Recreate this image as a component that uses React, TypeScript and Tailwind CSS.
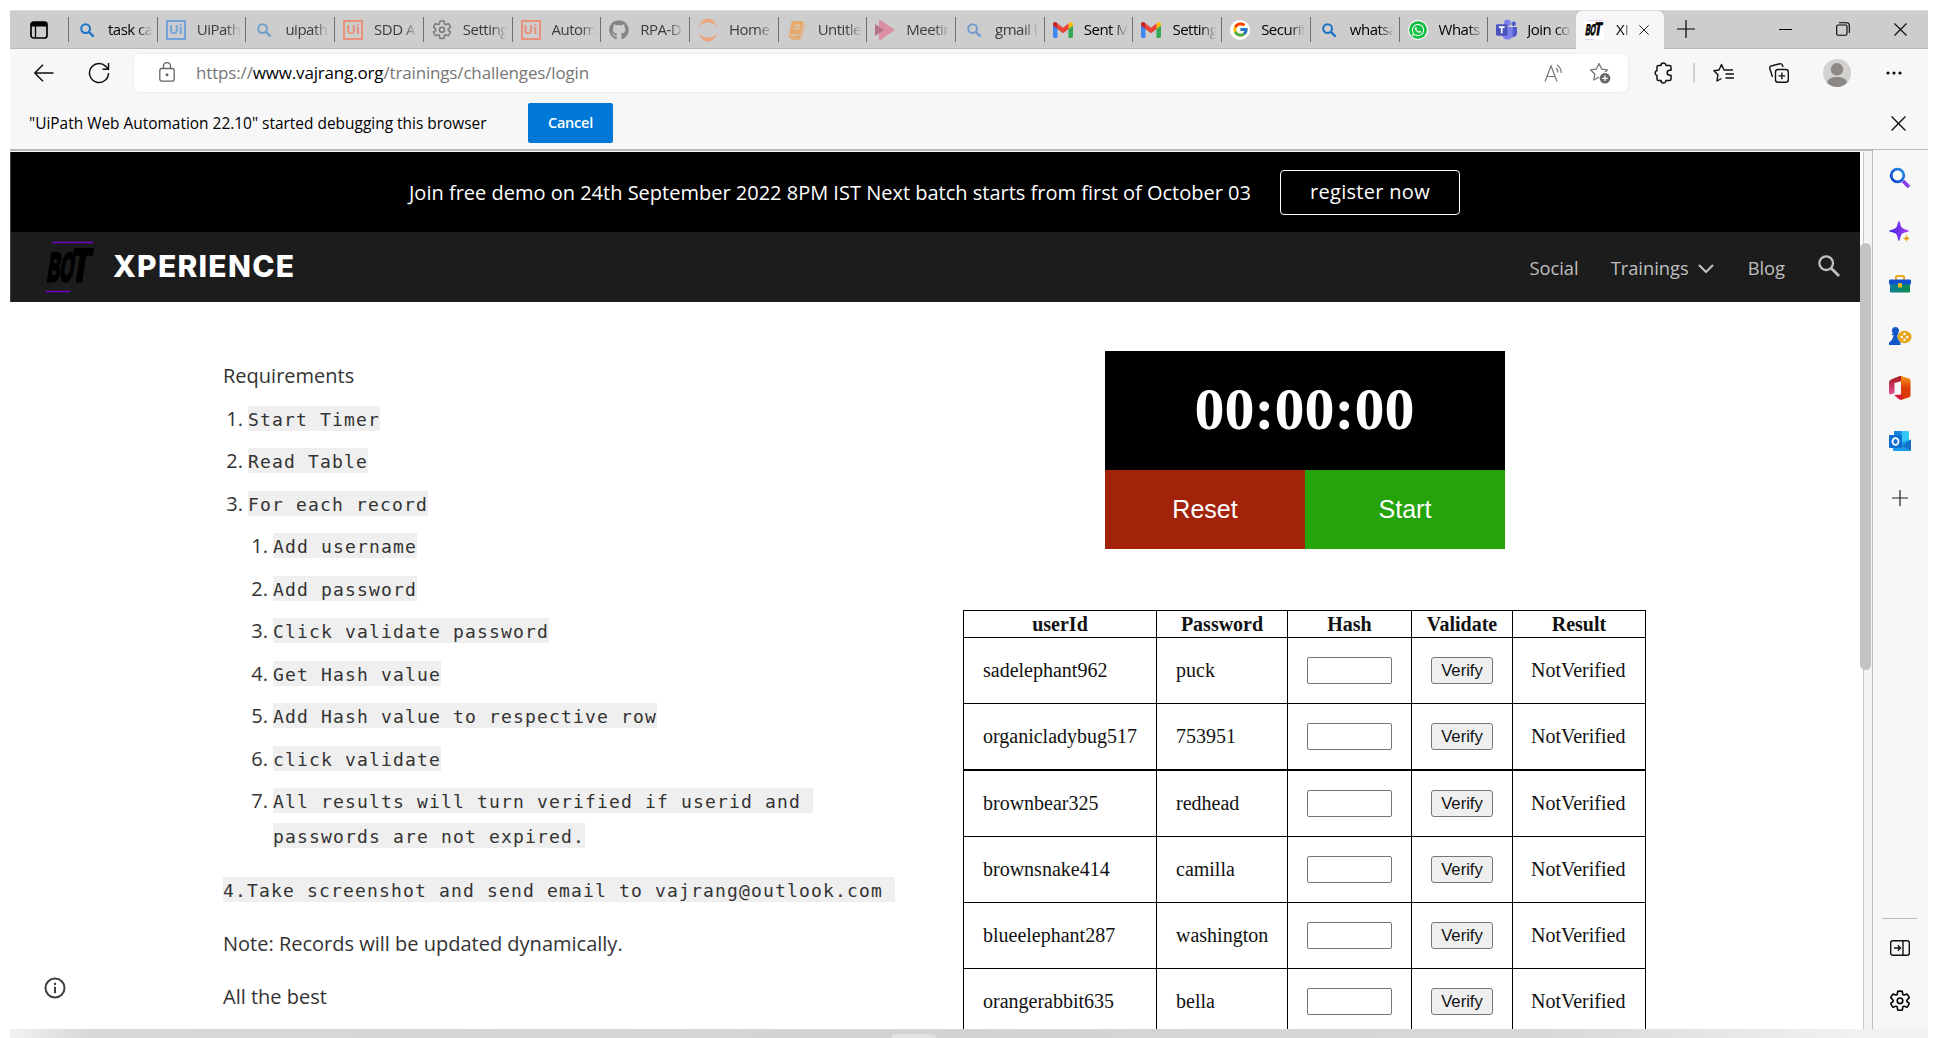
import type { ReactNode } from 'react';
import { FcGoogle } from 'react-icons/fc';
import { FaGithub, FaWhatsapp } from 'react-icons/fa';

type IconProps = { className?: string };

/* ---------- favicons ---------- */

const Magnifier = ({ className = '' }: IconProps) => (
  <svg viewBox="0 0 20 20" className={`h-5 w-5 ${className}`} fill="none" stroke="#1a73c7" strokeWidth="2">
    <circle cx="8.6" cy="8.6" r="4.4" />
    <path d="M12 12l4.6 4.6" strokeWidth="2.4" />
  </svg>
);

const UiLogo = ({ className = '' }: IconProps) => (
  <span
    className={`flex h-5 w-5 items-center justify-center border-2 border-current font-['Open_Sans',sans-serif] text-[13px] font-bold leading-none ${className}`}
  >
    Ui
  </span>
);

const Gear = ({ className = '' }: IconProps) => (
  <svg viewBox="1 0 22 22.400" className={className} fill="none" stroke="currentColor" strokeWidth="1.5" strokeLinejoin="round">
    <path d="M12 2c.7 0 1.400.1 2.100.2l.5 2.600c.1.6.8 1 1.400.8l2.500-.9c1 1.100 1.700 2.300 2.100 3.700l-2 1.700c-.5.400-.5 1.200 0 1.600l2 1.700c-.4 1.400-1.100 2.600-2.100 3.700l-2.500-.9c-.6-.2-1.300.2-1.400.8l-.5 2.600c-1.400.3-2.800.3-4.200 0l-.5-2.600c-.1-.6-.8-1-1.400-.8l-2.500.9c-1-1.100-1.700-2.300-2.100-3.700l2-1.700c.5-.4.5-1.200 0-1.600l-2-1.700c.4-1.400 1.100-2.600 2.100-3.700l2.500.9c.6.2 1.300-.2 1.400-.8l.5-2.600c.7-.1 1.400-.2 2.100-.2z" />
    <circle cx="12" cy="11" r="2.600" />
  </svg>
);

const Jupyter = () => (
  <svg viewBox="0 0 20 24" className="h-6 w-5" fill="#e9a57c">
    <path d="M1 8.500C3 2.500 7 .5 10 .5s7 2 9 8C16.500 5.700 13.500 4.500 10 4.500S3.500 5.700 1 8.500z" />
    <path d="M1 15.500c2 6 6 8 9 8s7-2 9-8c-2.500 2.800-5.500 4-9 4s-6.500-1.200-9-4z" />
  </svg>
);

const Notebook = () => (
  <svg viewBox="0 0 20 20" className="h-5 w-[17px]" preserveAspectRatio="none">
    <path d="M5.500 1H17c1 0 1.500.8 1.200 1.700L14.500 17c-.3 1-1 1.500-2 1.500H3c-1.500 0-2.400-1-2-2.500L4 2.500C4.200 1.500 4.700 1 5.500 1z" fill="#e6a96b" />
    <path d="M18.500 4l1 1-3.600 13c-.3 1-1 1.500-2 1.500H4" fill="none" stroke="#e6a96b" />
    <path d="M7.500 5.500h7M6.800 8.500h7M2.500 15h10" stroke="#d6cbbd" strokeWidth="1.400" />
  </svg>
);

const Stream = () => (
  <svg viewBox="0 0 20 22" className="h-[22px] w-5">
    <path d="M4 0l16 11L4 22z" fill="#da8fa3" />
    <path d="M0 5l9 6-9 6z" fill="#b57486" />
  </svg>
);

const Gmail = () => (
  <svg viewBox="0 0 20 16" className="h-4 w-5">
    <path d="M0 3v11.500c0 .8.600 1.500 1.400 1.500H4.500V6.500z" fill="#4285f4" />
    <path d="M20 3v11.500c0 .8-.6 1.500-1.400 1.500h-3.100V6.500z" fill="#34a853" />
    <path d="M15.500 2v5L20 3.500V2.200C20 .2 17.800-.6 16.300.6z" fill="#fbbc04" />
    <path d="M4.500 7V1.500L10 5.700l5.500-4.200V7L10 11.200z" fill="#ea4335" />
    <path d="M0 2.200v1.300L4.500 7V1.500L3.700.6C2.200-.6 0 .2 0 2.200z" fill="#c5221f" />
  </svg>
);

const Google = () => (
  <span className="flex h-5 w-5 items-center justify-center rounded-full bg-white">
    <FcGoogle size={17} />
  </span>
);

const WhatsApp = () => (
  <span className="flex h-[18px] w-[18px] items-center justify-center rounded-full bg-[#12c143] text-white outline outline-1 outline-white">
    <FaWhatsapp size={14} />
  </span>
);

const Teams = () => (
  <svg viewBox="0 0 22 22" className="h-[21px] w-[21px]">
    <circle cx="12" cy="4" r="3.600" fill="#7b83eb" />
    <circle cx="18.500" cy="5" r="2.400" fill="#5059c9" />
    <path d="M15 8.500h7V15c0 2.500-2 4-4 4h-3z" fill="#5059c9" />
    <path d="M6.500 8.500h11V16c0 3.500-2.500 5.500-5.500 5.500S6.500 19.500 6.500 16z" fill="#7b83eb" />
    <rect x="0" y="5.500" width="12" height="12" rx="1.200" fill="#4b53bc" />
    <path d="M3 8.600h6M6 8.600v6.400" stroke="#fff" strokeWidth="1.800" />
  </svg>
);

const BotMark = ({ className = '', line = '#7a00cc' }: IconProps & { line?: string }) => (
  <svg viewBox="0 0 49 52" className={className}>
    <path d="M7.500 1.500H48" stroke={line} strokeWidth="1.400" />
    <path d="M.5 50.500H25" stroke={line} strokeWidth="1.400" />
    <g transform="skewX(-9)" fill="#000" stroke="#000" strokeWidth="2.800" fontFamily="Liberation Sans" fontWeight="700">
      <text x="7.500" y="40" fontSize="40" textLength="26" lengthAdjust="spacingAndGlyphs">BO</text>
      <text x="31" y="40" fontSize="46" textLength="18.500" lengthAdjust="spacingAndGlyphs">T</text>
    </g>
  </svg>
);

/* ---------- browser chrome ---------- */

const tabs: { icon: ReactNode; label: string; dim?: boolean }[] = [
  { icon: <Magnifier />, label: 'task ca' },
  { icon: <UiLogo className="text-[#76a2dc]" />, label: 'UiPath', dim: true },
  { icon: <Magnifier className="opacity-50" />, label: 'uipath', dim: true },
  { icon: <UiLogo className="text-[#e8917c]" />, label: 'SDD A', dim: true },
  { icon: <Gear className="h-[22px] w-[22px] text-[#777]" />, label: 'Setting', dim: true },
  { icon: <UiLogo className="text-[#e8917c]" />, label: 'Autom', dim: true },
  { icon: <FaGithub size={20} color="#858585" />, label: 'RPA-D', dim: true },
  { icon: <Jupyter />, label: 'Home', dim: true },
  { icon: <Notebook />, label: 'Untitle', dim: true },
  { icon: <Stream />, label: 'Meetin', dim: true },
  { icon: <Magnifier className="opacity-50" />, label: 'gmail l', dim: true },
  { icon: <Gmail />, label: 'Sent M' },
  { icon: <Gmail />, label: 'Setting' },
  { icon: <Google />, label: 'Securit' },
  { icon: <Magnifier />, label: 'whatsa' },
  { icon: <WhatsApp />, label: 'Whats' },
  { icon: <Teams />, label: 'Join co' },
];

const Cross = ({ className = '' }: IconProps) => (
  <svg viewBox="0 0 14 14" className={className} stroke="#111" strokeWidth="1.300">
    <path d="M.5.5l13 13M13.500.5l-13 13" />
  </svg>
);

const TabStrip = () => (
  <div className="flex h-[39px] border-t border-b border-t-[#dcdcdc] border-b-[#b9b9b9] bg-[#cdcdcd]">
    <div className="flex w-[58px] shrink-0 items-center pl-5">
      <svg viewBox="0 0 18 18" className="h-[18px] w-[18px]">
        <rect x="1" y="1" width="16" height="16" rx="2.500" fill="none" stroke="#000" strokeWidth="1.700" />
        <path d="M1 3a2 2 0 0 1 2-2h12a2 2 0 0 1 2 2v2.500H1z" />
        <path d="M5.500 5v12" stroke="#000" strokeWidth="1.300" />
      </svg>
    </div>
    <div className="flex w-[1508px] shrink-0">
      {tabs.map((t, i) => (
        <div key={i} className="flex min-w-0 flex-1 items-center">
          <div className="h-[25px] w-px shrink-0 bg-[#6f6f6f]" />
          <div className="ml-1.5 flex w-6 shrink-0 justify-center">{t.icon}</div>
          <div
            className={`mb-0.5 ml-[9px] w-[44px] shrink-0 overflow-hidden whitespace-nowrap text-[15px] leading-5 tracking-[-0.5px] [mask-image:linear-gradient(to_right,#000_65%,transparent)] ${t.dim ? 'text-[#3c3c3c]' : 'text-black'}`}
          >
            {t.label}
          </div>
        </div>
      ))}
    </div>
    <div className="-mb-px flex w-[88px] shrink-0 items-center rounded-t-md bg-[#f7f7f7] pl-2">
      <div className="w-5 shrink-0 bg-white">
        <BotMark className="h-5 w-5" line="#c9a0f5" />
      </div>
      <div className="mb-0.5 ml-[12px] w-[13px] shrink-0 overflow-hidden whitespace-nowrap text-[15px] leading-5 [mask-image:linear-gradient(to_right,#000_70%,transparent)]">XI</div>
      <Cross className="ml-2.5 h-2.5 w-2.5" />
    </div>
    <div className="flex flex-1 items-center pb-px pl-[13px]">
      <svg viewBox="0 0 18 18" className="h-[18px] w-[18px]" stroke="#000" strokeWidth="1.200">
        <path d="M9 0v18M0 9h18" />
      </svg>
      <div className="ml-auto flex items-center pr-[21px]">
        <div className="h-px w-[13px] bg-black" />
        <svg viewBox="0 0 14 14" className="ml-11 h-3.5 w-3.5" fill="none" stroke="#000" strokeWidth="1.100">
          <rect x=".7" y="3" width="10.300" height="10.300" rx="1.500" />
          <path d="M3 .7h7.500a2.800 2.800 0 0 1 2.800 2.800V11" />
        </svg>
        <Cross className="ml-11 h-[13px] w-[13px]" />
      </div>
    </div>
  </div>
);

const star = 'M10 1.500l2.600 5.600 6 .7-4.400 4.200 1.100 6L10 15.100 4.700 18l1.100-6L1.400 7.800l6-.7z';

const Toolbar = () => (
  <div className="flex h-12 items-center">
    <div className="flex w-[124px] shrink-0 items-center pl-6">
      <svg viewBox="0 0 20 18" className="h-[18px] w-5" fill="none" stroke="#111" strokeWidth="1.500">
        <path d="M19.500 9H1M9 .8L.8 9 9 17.200" />
      </svg>
      <svg viewBox="0 0 22 22" className="ml-[34px] h-[22px] w-[22px]" fill="none" stroke="#111" strokeWidth="1.500">
        <path d="M20.500 11a9.500 9.500 0 1 1-3-6.900L20.200 7M20.500 1v6.200h-6" />
      </svg>
    </div>
    <div className="flex h-[38px] w-[1494px] shrink-0 items-center rounded-md bg-white shadow-[0_0_3px_rgba(0,0,0,0.08)]">
      <svg viewBox="0 0 16 20" className="mb-0.5 ml-[25px] h-5 w-4" fill="none" stroke="#666" strokeWidth="1.300">
        <rect x=".8" y="6.500" width="14.400" height="12.600" rx="2" />
        <path d="M4.500 6.500V4a3.500 3.500 0 0 1 7 0v2.500" />
        <circle cx="8" cy="12.800" r=".9" fill="#666" />
      </svg>
      <div className="ml-[21px] text-[17px] leading-6 tracking-[-0.16px] text-[#767676]">
        https://<span className="text-black">www.vajrang.org</span>/trainings/challenges/login
      </div>
      <svg viewBox="0 0 20 18" className="mb-px ml-auto h-[18px] w-5" fill="none" stroke="#777" strokeWidth="1.200">
        <path d="M1 17.500L7 2l6 15.500M3 12.500h8M12 4.200c1.500 1.200 2 2.500 2 4.300M13.200 1c2.600 2 4 4.500 4 8" />
      </svg>
      <svg viewBox="0 0 22 22" className="mr-[17px] ml-[25px] h-[22px] w-[22px]" fill="none" stroke="#777" strokeWidth="1.300" strokeLinejoin="round">
        <path d={star} />
        <circle cx="16" cy="16.300" r="6.200" fill="#fff" stroke="none" />
        <circle cx="16" cy="16.300" r="5.300" fill="#666" stroke="none" />
        <path d="M16 13.500v5.600M13.200 16.300h5.600" stroke="#fff" />
      </svg>
    </div>
    <div className="flex flex-1 items-center text-[#111]">
      <svg viewBox="0 0 20 22" className="ml-[25px] h-[22px] w-5" fill="none" stroke="currentColor" strokeWidth="1.500" strokeLinejoin="round">
        <path d="M8 3.500a2.500 2.500 0 0 1 5 0H16.500a1.500 1.500 0 0 1 1.500 1.500V8.300h-1.300a2.500 2.500 0 0 0 0 5H18V17a1.500 1.500 0 0 1-1.500 1.500H13a2.500 2.500 0 0 1-5 0H5.500A1.500 1.500 0 0 1 4 17v-3.500a2.600 2.600 0 0 1 0-5V5a1.500 1.500 0 0 1 1.500-1.500z" />
      </svg>
      <div className="ml-5 h-5 w-0.5 bg-[#d0d0d0]" />
      <svg viewBox="0 0 22 20" className="ml-[18px] h-5 w-[22px]" fill="none" stroke="currentColor" strokeWidth="1.400" strokeLinejoin="round">
        <path d="M20 7h-6.300L11 7 8.500 1.500 6 7 .9 7.700l4 4L4 18l4.500-2.500M12.500 11H21M12.500 15H21" />
      </svg>
      <svg viewBox="0 0 20 20" className="ml-[34px] h-5 w-5" fill="none" stroke="currentColor" strokeWidth="1.400">
        <rect x="6.500" y="6.500" width="12.800" height="12.800" rx="2.500" />
        <path d="M12.900 9.500v6.800M9.500 12.900h6.800M14 4l-.6-1.700a2 2 0 0 0-2.500-1.500L2.200 3A2 2 0 0 0 .8 5.500L3.500 14" />
      </svg>
      <svg viewBox="0 0 28 28" className="ml-[34px] h-7 w-7">
        <circle cx="14" cy="14" r="14" fill="#d3d1cf" />
        <circle cx="14" cy="10.300" r="6.200" fill="#8b8885" />
        <path d="M4 23.800C5 19.500 9 18 14 18s9 1.500 10 5.800A14 14 0 0 1 4 23.800z" fill="#8b8885" />
      </svg>
      <svg viewBox="0 0 16 4" className="ml-[35px] h-1 w-4" fill="currentColor">
        <circle cx="2" cy="2" r="1.600" />
        <circle cx="8" cy="2" r="1.600" />
        <circle cx="14" cy="2" r="1.600" />
      </svg>
    </div>
  </div>
);

const DebugBar = () => (
  <div className="flex h-[52px] items-center pr-[22px] pl-[19px]">
    <div className="w-[499px] pb-px text-[15.450px] leading-6 whitespace-nowrap text-black">
      "UiPath Web Automation 22.10" started debugging this browser
    </div>
    <button className="h-10 w-[85px] rounded-xs bg-[#0078d7] text-[14.500px] font-semibold tracking-[-0.2px] text-white">Cancel</button>
    <Cross className="ml-auto h-[15px] w-[15px]" />
  </div>
);

/* ---------- page ---------- */

const Banner = () => (
  <div className="flex h-20 items-center border-l border-[#444] bg-black pl-[398px] text-xl text-white">
    <div className="w-[871px] pt-0.5 whitespace-nowrap">
      Join free demo on 24th September 2022 8PM IST Next batch starts from first of October 03
    </div>
    <div className="flex h-[45px] w-[180px] items-center justify-center rounded border border-white pb-px tracking-[0.3px]">register now</div>
  </div>
);

const NavBar = () => (
  <div className="flex h-[70px] items-center border-l border-[#444] bg-[#1c1c1c] pr-5 pl-[34px] text-[18.300px] text-[#bfbfbf]">
    <BotMark className="h-[52px] w-[49px]" />
    <div className="mb-0.5 ml-[19px] font-['Inter',sans-serif] text-[30px] font-extrabold tracking-[1.250px] text-white">XPERIENCE</div>
    <div className="ml-auto flex items-center">
      <span className="mt-px">Social</span>
      <span className="mt-px ml-8">Trainings</span>
      <svg viewBox="0 0 16 10" className="mt-[3px] ml-[9px] h-2.5 w-4" fill="none" stroke="currentColor" strokeWidth="2.200">
        <path d="M1 1l7 7 7-7" />
      </svg>
      <span className="mt-px ml-[34px]">Blog</span>
      <svg viewBox="0 0 22 22" className="mb-0.5 ml-[33px] h-[22px] w-[22px]" fill="none" stroke="currentColor" strokeWidth="2.300">
        <circle cx="8.200" cy="8.200" r="6.800" />
        <path d="M13 13l8 8" strokeWidth="2.800" />
      </svg>
    </div>
  </div>
);

const Code = ({ children }: { children: string }) => (
  <code className="block h-[25px] w-fit bg-[#efefef] font-['DejaVu_Sans_Mono',monospace] text-[18px] leading-[27px] tracking-[1.163px] whitespace-pre">
    {children}
  </code>
);

const Item = ({ n, children, sub = false }: { n: number; children: ReactNode; sub?: boolean }) => (
  <li className={`flex h-[42.5px] ${sub ? 'ml-[25px]' : ''}`}>
    <span className="w-5 shrink-0 text-right leading-[26px]">{n}.</span>
    <div className="ml-[5px]">{children}</div>
  </li>
);

const Requirements = () => (
  <section className="ml-[213px] w-[718px] shrink-0 pt-[57px] text-xl text-[#333]">
    <h2 className="h-[46.5px] leading-[34px]">Requirements</h2>
    <ol>
      {['Start Timer', 'Read Table', 'For each record'].map((t, i) => (
        <Item key={t} n={i + 1}>
          <Code>{t}</Code>
        </Item>
      ))}
      {['Add username', 'Add password', 'Click validate password', 'Get Hash value', 'Add Hash value to respective row', 'click validate'].map((t, i) => (
        <Item key={t} n={i + 1} sub>
          <Code>{t}</Code>
        </Item>
      ))}
      <Item n={7} sub>
        <Code>{'All results will turn verified if userid and '}</Code>
        <div className="h-2.5" />
        <Code>passwords are not expired.</Code>
      </Item>
    </ol>
    <div className="mt-[46px]">
      <Code>{'4.Take screenshot and send email to vajrang@outlook.com '}</Code>
    </div>
    <p className="mt-[25px] leading-[34px]">Note: Records will be updated dynamically.</p>
    <p className="mt-[19px] leading-[34px]">All the best</p>
  </section>
);

const rows = [
  ['sadelephant962', 'puck'],
  ['organicladybug517', '753951'],
  ['brownbear325', 'redhead'],
  ['brownsnake414', 'camilla'],
  ['blueelephant287', 'washington'],
  ['orangerabbit635', 'bella'],
];

const Records = () => (
  <div className="ml-[22px] w-[683px] border-r border-black font-['Liberation_Serif',serif] text-xl text-[#111]">
    <div className="grid h-[27px] grid-cols-[193px_131px_124px_101px_133px] border-t border-black text-center leading-[27px] font-bold">
      {['userId', 'Password', 'Hash', 'Validate', 'Result'].map((h) => (
        <div key={h} className="border-l border-black">{h}</div>
      ))}
    </div>
    {rows.map(([id, pw], i) => (
      <div
        key={id}
        className={`grid grid-cols-[193px_131px_124px_101px_133px] border-black ${i === 2 ? 'h-[67px] border-t-2' : 'h-[66px] border-t'}`}
      >
        <div className="flex items-center border-l border-black pb-px pl-[19px]">{id}</div>
        <div className="flex items-center border-l border-black pb-px pl-[19px]">{pw}</div>
        <div className="flex items-center justify-center border-l border-black">
          <input className="h-[27px] w-[85px] rounded-xs border border-[#767676] bg-white" />
        </div>
        <div className="flex items-center justify-center border-l border-black">
          <button className="h-[27px] w-[62px] rounded-[3px] border border-[#767676] bg-[#efefef] font-['Liberation_Sans',sans-serif] text-[16.670px] leading-[25px]">Verify</button>
        </div>
        <div className="flex items-center border-l border-black pb-px pl-[18px]">NotVerified</div>
      </div>
    ))}
  </div>
);

const Timer = () => (
  <div className="ml-[164px] w-[400px] text-center text-white">
    <div className="h-[119px] bg-black pr-px font-['Liberation_Serif',serif] text-[60px] leading-[116px] font-bold">00:00:00</div>
    <div className="grid h-[79px] grid-cols-2 font-['Liberation_Sans',sans-serif] text-[25px] leading-[79px]">
      <button className="bg-[#a2230a]">Reset</button>
      <button className="bg-[#24a30a]">Start</button>
    </div>
  </div>
);

const Page = () => (
  <main className="relative h-[877px] w-[1850px] shrink-0 overflow-hidden bg-white">
    <Banner />
    <NavBar />
    <div className="flex">
      <Requirements />
      <div className="pt-[49px]">
        <Timer />
        <div className="h-[61px]" />
        <Records />
      </div>
    </div>
    <svg viewBox="0 0 22 22" className="absolute bottom-[30px] left-[33.500px] h-[22px] w-[22px]" fill="none" stroke="#3c4043" strokeWidth="2">
      <circle cx="11" cy="11" r="9.500" />
      <path d="M11 9.800v6.400M11 5.700v2.200" />
    </svg>
  </main>
);

/* ---------- sidebar ---------- */

const Sidebar = () => (
  <aside className="flex w-14 shrink-0 flex-col items-center border-l border-[#bdbdbd] bg-[#f7f7f7] pt-[17px] pr-0.5">
    <svg viewBox="0 0 22 22" className="h-[22px] w-[22px]" fill="none">
      <defs>
        <linearGradient id="lens" x1="0" y1="1" x2="1" y2="0">
          <stop offset="0" stopColor="#0a3fd0" />
          <stop offset="1" stopColor="#2a8fe0" />
        </linearGradient>
      </defs>
      <path d="M14 14l6 6" stroke="#8a3cf0" strokeWidth="3.800" />
      <circle cx="8.500" cy="8.500" r="6.300" stroke="url(#lens)" strokeWidth="2.800" fill="#fff" />
    </svg>
    <svg viewBox="0 0 22 22" className="mt-8 h-[22px] w-[22px]">
      <defs>
        <linearGradient id="spark">
          <stop offset="0" stopColor="#3a28d8" />
          <stop offset="1" stopColor="#b03cff" />
        </linearGradient>
      </defs>
      <path d="M10 0c1 0 1.200 4 2.600 6.200C14.500 8.600 20 9 20 10s-5.500 1-7.400 3.300C11.200 15.500 11 20 10 20s-1.200-4.500-2.600-6.700C5.500 11 0 11 0 10s5.500-1.400 7.400-3.800C8.800 4 9 0 10 0z" fill="url(#spark)" />
      <path d="M17.500 12.500c.8 3.400 1.200 4 4.500 5-3.300.8-3.700 1.200-4.500 4.500-.8-3.300-1.200-3.700-4.500-4.500 3.300-1 3.700-1.600 4.500-5z" fill="#eaa51a" stroke="#f7f7f7" strokeWidth=".6" />
    </svg>
    <svg viewBox="0 0 22 18" className="mt-8 h-[18px] w-[22px]">
      <defs>
        <linearGradient id="box">
          <stop offset="0" stopColor="#0c7d9c" />
          <stop offset="1" stopColor="#0b8a4a" />
        </linearGradient>
      </defs>
      <path d="M7 5V2.500A1.500 1.500 0 0 1 8.500 1h5A1.500 1.500 0 0 1 15 2.500V5" fill="none" stroke="#eba91c" strokeWidth="2" />
      <rect x="1" y="8" width="20" height="9.500" rx="1" fill="url(#box)" />
      <rect x="0" y="4.500" width="22" height="5" rx="1.300" fill="#0f4fd0" />
      <rect x="9" y="8" width="4" height="4.500" rx="1" fill="#f2b71e" />
    </svg>
    <svg viewBox="0 0 24 20" className="mt-[33px] h-5 w-6">
      <ellipse cx="16.500" cy="11" rx="7" ry="6.200" fill="#eaa61a" />
      <g fill="#fff">
        <circle cx="16.500" cy="8" r="1.200" />
        <circle cx="16.500" cy="13.800" r="1.200" />
        <circle cx="13.800" cy="11" r="1.200" />
        <circle cx="19.200" cy="11" r="1.200" />
      </g>
      <path d="M7.500 1a3.700 3.700 0 0 1 2.600 6.300V9h-1c.2 3 1 5 3.400 7.500V19H1v-2.500C4 14.500 5.200 12 5.500 9h-2l1.300-1.700A3.700 3.700 0 0 1 7.500 1z" fill="#1257c9" />
    </svg>
    <svg viewBox="0 0 22 24" className="mt-[30px] h-6 w-[22px]">
      <defs>
        <linearGradient id="officeL" x1="0" y1="0" x2="0" y2="1">
          <stop offset="0" stopColor="#a81414" />
          <stop offset="1" stopColor="#e0559b" />
        </linearGradient>
        <linearGradient id="officeR" x1="0" y1="0" x2="0" y2="1">
          <stop offset="0" stopColor="#f59a12" />
          <stop offset=".5" stopColor="#dd3b06" />
        </linearGradient>
      </defs>
      <path d="M11 0L2 3.500Q0 4.500 0 6.500V17q0 1.500 1.500 1.500L5.500 17V7l7.500-2V0z" fill="url(#officeL)" />
      <path d="M12 0l7.500 2.200Q21.500 3 21.500 5v14q0 2-2 2.600L12 24z" fill="url(#officeR)" />
      <path d="M5 19l8.500-.5V23q-1.800 1.400-3.500.3z" fill="#d91b3a" />
    </svg>
    <svg viewBox="0 0 22 20" className="mt-[31px] h-5 w-[22px]">
      <rect x="5" y="0" width="15" height="14" rx="1" fill="#32c5f5" />
      <path d="M5 0h7.500v8H5z" fill="#1283d8" />
      <path d="M4 12l9-1 9-2.500V19q0 1-1 1H5q-1 0-1-1z" fill="#1c9bea" />
      <path d="M22 8.500L13 15l9 5z" fill="#1273c4" />
      <rect x="0" y="4" width="13" height="13" rx="1" fill="#0f6fd0" />
      <ellipse cx="6.500" cy="10.500" rx="3" ry="3.400" fill="none" stroke="#fff" strokeWidth="1.800" />
    </svg>
    <svg viewBox="0 0 16 16" className="mt-[39px] h-4 w-4" stroke="#222" strokeWidth="1.200">
      <path d="M8 0v16M0 8h16" />
    </svg>
    <div className="mt-auto h-px w-[35px] bg-[#bbb]" />
    <svg viewBox="0 0 20 16" className="mt-[21px] h-4 w-5" fill="none" stroke="#111" strokeWidth="1.400">
      <rect x=".7" y=".7" width="18.600" height="14.600" rx="2" />
      <path d="M13 1v14M4 8h6M7.800 5.300L10.500 8l-2.700 2.700" />
    </svg>
    <Gear className="mt-[33px] mb-4 h-6 w-6 text-black" />
  </aside>
);

export default function App() {
  return (
    <div className="h-[1038px] w-[1938px] overflow-hidden bg-white pt-2.5 pl-2.5 font-['Open_Sans',sans-serif]">
      <div className="w-[1918px] bg-[#f7f7f7]">
        <TabStrip />
        <Toolbar />
        <DebugBar />
        <div className="border-t border-[#b9b9b9]" />
        <div className="flex h-[879px]">
          <div className="flex w-[1862px] shrink-0 border-t border-[#b9b9b9] pt-px">
            <Page />
            <div className="relative w-3 bg-[#f3f3f3]">
              <div className="h-full w-1 border-r border-[#c8c8c8] bg-white" />
              <div className="absolute top-[91px] left-0 h-[427px] w-[11px] rounded-full bg-[#c3c3c3]" />
            </div>
          </div>
          <Sidebar />
        </div>
        <div className="flex h-[9px] items-end bg-[linear-gradient(to_right,#f2f2f2,#d8d8d8_4%,#d3d3d3_50%,#d8d8d8_80%,#f1f1f1_96%)] pl-[882px]">
          <div className="h-1 w-11 rounded-t-sm bg-[#e2e2e2]" />
        </div>
      </div>
    </div>
  );
}
